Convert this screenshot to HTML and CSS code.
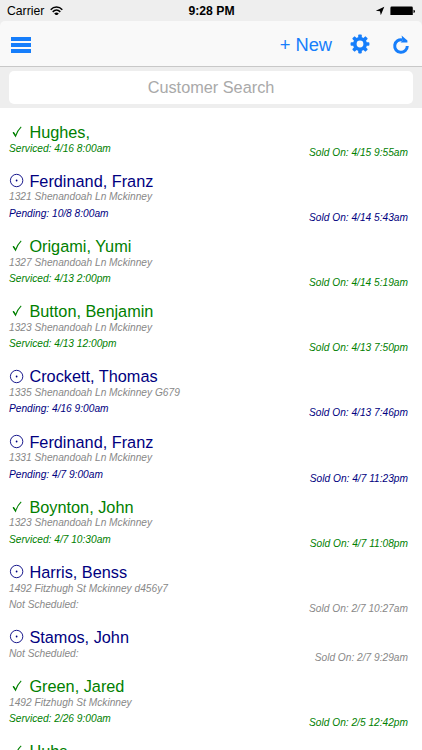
FILE: index.html
```html
<!DOCTYPE html>
<html lang="en">
<head>
    <meta charset="UTF-8">
    <meta name="viewport" content="width=device-width, initial-scale=1.0">
    <title>Customers</title>
    <link rel="stylesheet" href="styles.css">
</head>
<body>
    <!-- shared row icons -->
    <svg class="defs" width="0" height="0">
        <symbol id="check" viewBox="0 0 15 16">
            <path d="M4.1 8.4 L6.6 12.2 C7.7 8.8 9.6 5.2 12.2 2.8" fill="none" stroke="currentColor" stroke-width="1.1"/>
            <path d="M3.7 8.3 L4.9 7.9 L6.9 11 L6.6 12.5 L6.2 12.3 Z" fill="currentColor"/>
        </symbol>
        <symbol id="pending" viewBox="0 0 15 16">
            <circle cx="7.6" cy="7.5" r="6.2" fill="none" stroke="currentColor" stroke-width="0.9"/>
            <circle cx="7.6" cy="7.5" r="0.9" fill="currentColor"/>
        </symbol>
    </svg>

    <div class="status-bar">
        <div class="status-left">
            <span>Carrier</span>
            <svg width="13" height="10" viewBox="0 0 13 10">
                <path d="M0.7 3.7 C4 0.2 9 0.2 12.3 3.7" fill="none" stroke="#000" stroke-width="1.5"/>
                <path d="M2.7 5.9 C5 3.6 8 3.6 10.3 5.9" fill="none" stroke="#000" stroke-width="1.5"/>
                <path d="M4.2 7.4 Q6.5 5.4 8.8 7.4 L6.5 9.8 Z" fill="#000"/>
            </svg>
        </div>
        <div class="clock">9:28 PM</div>
        <div class="status-right">
            <svg width="10" height="10" viewBox="0 0 10 10">
                <path d="M9.3 0.8 L5.8 9.2 L5 5.3 L0.8 4.8 Z" fill="#000"/>
            </svg>
            <svg width="26" height="11" viewBox="0 0 26 11">
                <rect x="0.4" y="0.6" width="22.4" height="9.6" rx="1.3" fill="#000"/>
                <path d="M23.5 3.8 Q25 4 25 5.4 Q25 6.8 23.5 7 Z" fill="#000"/>
            </svg>
        </div>
    </div>

    <div class="nav-bar">
        <div class="menu-button">
            <span></span>
            <span></span>
            <span></span>
        </div>
        <div class="nav-actions">
            <a class="new-button">+ New</a>
            <svg class="gear" width="20" height="20" viewBox="-10 -10 20 20" fill="#167efb">
                <circle r="5.2" fill="none" stroke="#167efb" stroke-width="3.6"/>
                <g id="teeth">
                    <rect x="-1.8" y="-9.4" width="3.6" height="4" rx="0.8"/>
                    <rect x="-1.8" y="5.4" width="3.6" height="4" rx="0.8"/>
                    <rect x="-9.4" y="-1.8" width="4" height="3.6" rx="0.8"/>
                    <rect x="5.4" y="-1.8" width="4" height="3.6" rx="0.8"/>
                </g>
                <use href="#teeth" transform="rotate(45)"/>
            </svg>
            <svg class="refresh" width="18" height="20" viewBox="0 0 18 20">
                <path d="M10.4 4.9 A6.3 6.3 0 1 0 15.3 11.1" fill="none" stroke="#167efb" stroke-width="3"/>
                <path d="M9.6 0.6 L15.4 5.6 L15.4 7.6 L8.6 7.6 L10.4 5.6 Z" fill="#167efb"/>
            </svg>
        </div>
    </div>

    <div class="search-bar">
        <input type="text" placeholder="Customer Search">
    </div>

    <div class="customer-list">
        <div class="customer serviced">
            <div class="name"><svg><use href="#check"/></svg>Hughes,</div>
            <div class="dates"><span>Serviced: 4/16 8:00am</span><span class="sold">Sold On: 4/15 9:55am</span></div>
        </div>
        <div class="customer pending">
            <div class="name"><svg><use href="#pending"/></svg>Ferdinand, Franz</div>
            <div class="address">1321 Shenandoah Ln Mckinney</div>
            <div class="dates"><span>Pending: 10/8 8:00am</span><span class="sold">Sold On: 4/14 5:43am</span></div>
        </div>
        <div class="customer serviced">
            <div class="name"><svg><use href="#check"/></svg>Origami, Yumi</div>
            <div class="address">1327 Shenandoah Ln Mckinney</div>
            <div class="dates"><span>Serviced: 4/13 2:00pm</span><span class="sold">Sold On: 4/14 5:19am</span></div>
        </div>
        <div class="customer serviced">
            <div class="name"><svg><use href="#check"/></svg>Button, Benjamin</div>
            <div class="address">1323 Shenandoah Ln Mckinney</div>
            <div class="dates"><span>Serviced: 4/13 12:00pm</span><span class="sold">Sold On: 4/13 7:50pm</span></div>
        </div>
        <div class="customer pending">
            <div class="name"><svg><use href="#pending"/></svg>Crockett, Thomas</div>
            <div class="address">1335 Shenandoah Ln Mckinney G679</div>
            <div class="dates"><span>Pending: 4/16 9:00am</span><span class="sold">Sold On: 4/13 7:46pm</span></div>
        </div>
        <div class="customer pending">
            <div class="name"><svg><use href="#pending"/></svg>Ferdinand, Franz</div>
            <div class="address">1331 Shenandoah Ln Mckinney</div>
            <div class="dates"><span>Pending: 4/7 9:00am</span><span class="sold">Sold On: 4/7 11:23pm</span></div>
        </div>
        <div class="customer serviced">
            <div class="name"><svg><use href="#check"/></svg>Boynton, John</div>
            <div class="address">1323 Shenandoah Ln Mckinney</div>
            <div class="dates"><span>Serviced: 4/7 10:30am</span><span class="sold">Sold On: 4/7 11:08pm</span></div>
        </div>
        <div class="customer unscheduled">
            <div class="name"><svg><use href="#pending"/></svg>Harris, Benss</div>
            <div class="address">1492 Fitzhugh St Mckinney d456y7</div>
            <div class="dates"><span>Not Scheduled:</span><span class="sold">Sold On: 2/7 10:27am</span></div>
        </div>
        <div class="customer unscheduled">
            <div class="name"><svg><use href="#pending"/></svg>Stamos, John</div>
            <div class="dates"><span>Not Scheduled:</span><span class="sold">Sold On: 2/7 9:29am</span></div>
        </div>
        <div class="customer serviced">
            <div class="name"><svg><use href="#check"/></svg>Green, Jared</div>
            <div class="address">1492 Fitzhugh St Mckinney</div>
            <div class="dates"><span>Serviced: 2/26 9:00am</span><span class="sold">Sold On: 2/5 12:42pm</span></div>
        </div>
        <div class="customer serviced">
            <div class="name"><svg><use href="#check"/></svg>Hubs</div>
        </div>
    </div>
</body>
</html>
```
FILE: styles.css
```css
* {
    box-sizing: border-box;
}

body {
    margin: 0;
    height: 750px;
    overflow: hidden;
    display: flex;
    flex-direction: column;
    background-color: #ffffff;
    font-family: "Liberation Sans", Arial, sans-serif;
}

svg {
    display: block;
}

.defs {
    display: none;
}

/* status bar */
.status-bar {
    display: grid;
    grid-template-columns: 1fr auto 1fr;
    align-items: center;
    flex: none;
    height: 21px;
    padding: 1px 6px 0 7px;
    background-color: #eeeeee;
    font-size: 12.2px;
}

.status-left,
.status-right {
    display: flex;
    align-items: center;
    gap: 6px;
}

.status-right {
    justify-content: flex-end;
    gap: 5px;
}

.clock {
    font-weight: bold;
}

/* nav bar */
.nav-bar {
    display: flex;
    justify-content: space-between;
    align-items: center;
    flex: none;
    height: 46px;
    padding: 2px 12px 0 11px;
    background-color: #f9f9f9;
    border-bottom: 1px solid #c8c8c8;
    border-radius: 5px 5px 0 0;
    box-shadow: 0 -6px 0 #eeeeee;
}

.menu-button {
    display: flex;
    flex-direction: column;
    gap: 1.6px;
    width: 20px;
    padding-top: 1px;
}

.menu-button span {
    height: 4px;
    background-color: #167efb;
}

.nav-actions {
    display: flex;
    align-items: center;
}

.new-button {
    color: #167efb;
    font-size: 18.3px;
}

.gear {
    margin-left: 18px;
    margin-bottom: 1px;
}

.refresh {
    margin-left: 22px;
}

/* search */
.search-bar {
    flex: none;
    height: 41px;
    padding: 4px 9px;
    background-color: #eeeeee;
}

.search-bar input {
    display: block;
    width: 100%;
    height: 33px;
    padding: 0;
    border: none;
    border-radius: 5px;
    background-color: #ffffff;
    font-family: inherit;
    font-size: 16.3px;
    text-align: center;
}

.search-bar input::placeholder {
    color: #a9a9a9;
}

/* customers */
.customer-list {
    padding: 15.6px 14px 0 9px;
}

.name {
    display: flex;
    align-items: center;
    gap: 5.4px;
    height: 17px;
    font-size: 16.3px;
    line-height: 16.3px;
}

.name svg {
    width: 15px;
    height: 16px;
}

.address,
.dates {
    font-size: 10.19px;
    font-style: italic;
    line-height: 16.3px;
}

.address {
    height: 16.3px;
    color: #888888;
}

.dates {
    display: flex;
    justify-content: space-between;
    height: 31.9px;
}

.sold {
    margin-top: 4px;
}

.serviced {
    color: #008000;
}

.pending,
.unscheduled .name {
    color: #000080;
}

.unscheduled {
    color: #888888;
}
```
